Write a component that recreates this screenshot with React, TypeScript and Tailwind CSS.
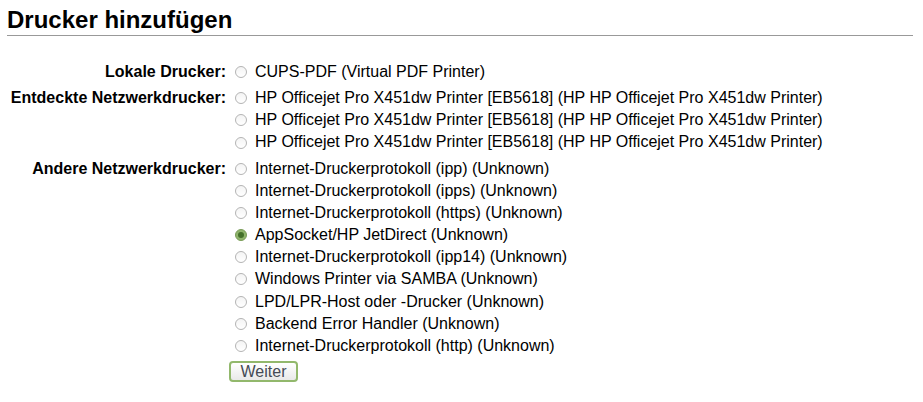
const groups = [
  { label: "Lokale Drucker:", items: ["CUPS-PDF (Virtual PDF Printer)"] },
  {
    label: "Entdeckte Netzwerkdrucker:",
    items: [
      "HP Officejet Pro X451dw Printer [EB5618] (HP HP Officejet Pro X451dw Printer)",
      "HP Officejet Pro X451dw Printer [EB5618] (HP HP Officejet Pro X451dw Printer)",
      "HP Officejet Pro X451dw Printer [EB5618] (HP HP Officejet Pro X451dw Printer)",
    ],
  },
  {
    label: "Andere Netzwerkdrucker:",
    items: [
      "Internet-Druckerprotokoll (ipp) (Unknown)",
      "Internet-Druckerprotokoll (ipps) (Unknown)",
      "Internet-Druckerprotokoll (https) (Unknown)",
      "AppSocket/HP JetDirect (Unknown)",
      "Internet-Druckerprotokoll (ipp14) (Unknown)",
      "Windows Printer via SAMBA (Unknown)",
      "LPD/LPR-Host oder -Drucker (Unknown)",
      "Backend Error Handler (Unknown)",
      "Internet-Druckerprotokoll (http) (Unknown)",
    ],
  },
];

function Radio({ checked }: { checked?: boolean }) {
  if (checked) {
    return (
      <span className="ml-[6px] w-[12px] h-[12px] rounded-full bg-[#8fb46c] border border-[#7a9c58] flex items-center justify-center shrink-0">
        <span className="w-[6px] h-[6px] rounded-full bg-[#44702a]" />
      </span>
    );
  }
  return (
    <span className="ml-[6px] w-[12px] h-[12px] rounded-full bg-gradient-to-b from-[#f4f4f4] to-white border border-[#b4b4b4] shrink-0" />
  );
}

export default function App() {
  return (
    <div className="min-h-screen bg-white text-black font-['Liberation_Sans',Arial,sans-serif]">
      <h1 className="ml-[7px] mr-[10px] pt-[6px] pb-[1px] border-b border-[#999] text-[24px] leading-[28px] font-bold">
        Drucker hinzufügen
      </h1>
      <div className="mt-[25px] flex flex-col gap-y-[4px] text-[16px] leading-[22.15px]">
        {groups.map((g) => (
          <div key={g.label} className="flex">
            <div className="w-[226px] text-right font-bold shrink-0">{g.label}</div>
            <div className="ml-[3px] flex flex-col">
              {g.items.map((t, i) => (
                <div key={i} className="flex items-center whitespace-nowrap">
                  <Radio checked={t.startsWith("AppSocket")} />
                  <span className="ml-[8px]">{t}</span>
                </div>
              ))}
            </div>
          </div>
        ))}
      </div>
      <div className="ml-[229px] mt-[3px]">
        <button className="w-[69px] h-[21px] rounded-[4px] border-2 border-[#92b86c] bg-gradient-to-b from-white to-[#e9e9e9] text-[16px] leading-[17px] text-[#454b55]">
          Weiter
        </button>
      </div>
    </div>
  );
}
